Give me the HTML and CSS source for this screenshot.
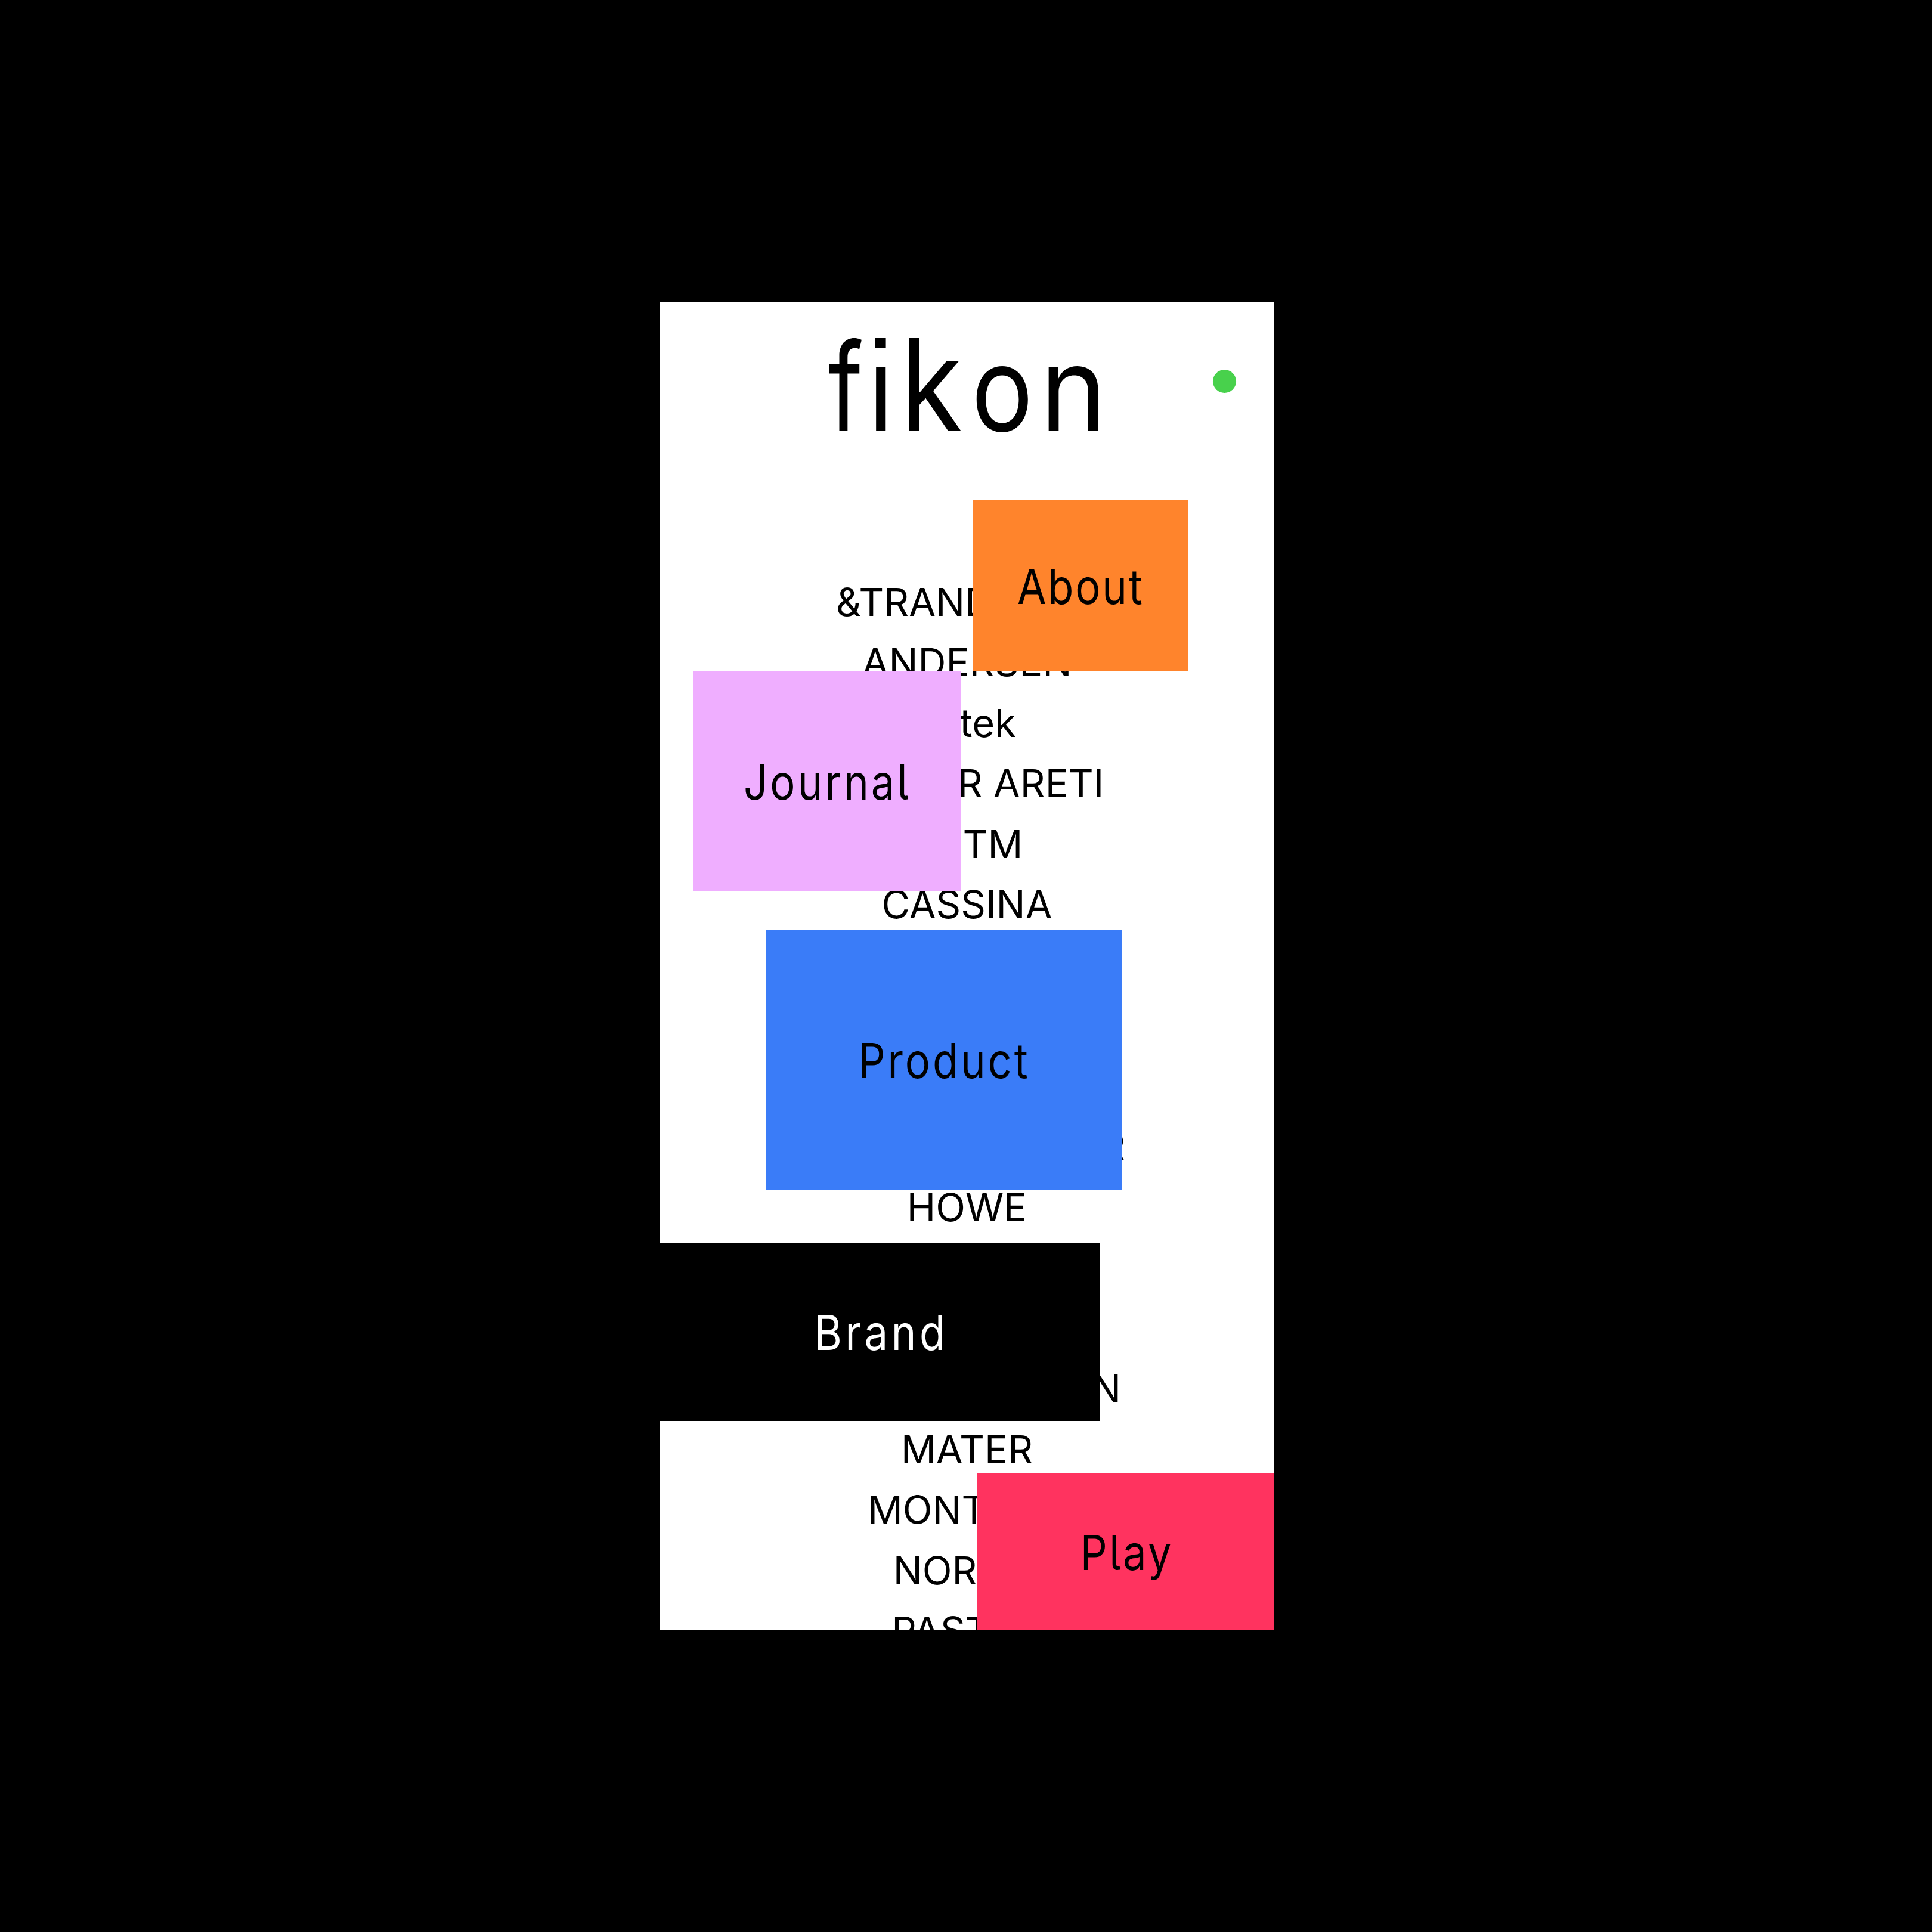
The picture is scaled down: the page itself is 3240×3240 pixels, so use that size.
FILE: index.html
```
<!DOCTYPE html>
<html lang="en">
<head>
<meta charset="utf-8">
<title>fikon</title>
<link rel="stylesheet" href="styles.css">
</head>
<body>
<main class="screen">
  <header class="header">
    <h1 class="logo"><span class="logo-f">f</span><span class="logo-i">i</span><span class="logo-k">k</span><span class="logo-o">o</span><span class="logo-n">n</span></h1>
    <span class="status"></span>
  </header>
  <ul class="brands">
    <li>&amp;TRANDITION</li>
    <li>ANDERSEN</li>
    <li>Artek</li>
    <li>ATELIER ARETI</li>
    <li>ASTM</li>
    <li>CASSINA</li>
    <li>FLOS</li>
    <li>FOGIA</li>
    <li>GUBI</li>
    <li>HERMAN MILLER</li>
    <li>HOWE</li>
    <li>KASTHALL</li>
    <li>LE KLINT</li>
    <li>LOUIS POULSEN</li>
    <li>MATER</li>
    <li>MONTANA</li>
    <li>NORR&#8201;11</li>
    <li>PASTOE</li>
  </ul>
  <nav>
    <a class="card about"><span>About</span></a>
    <a class="card journal"><span>Journal</span></a>
    <a class="card product"><span>Product</span></a>
    <a class="card brand"><span>Brand</span></a>
    <a class="card play"><span>Play</span></a>
  </nav>
</main>
</body>
</html>
```
FILE: styles.css
```
* {
  box-sizing: border-box;
}

body {
  display: flex;
  align-items: center;
  justify-content: center;
  height: 3240px;
  margin: 0;
  padding-left: 3px;
  background: #000;
  color: #000;
  font-family: Inter, "Liberation Sans", sans-serif;
}

.screen {
  position: relative;
  width: 1029px;
  height: 2226px;
  overflow: hidden;
  background: #fff;
}

.header {
  display: flex;
  align-items: flex-start;
  height: 451.5px;
  padding: 30px 0 0 282px;
}

/* wordmark: each letter is condensed from its baseline */
.logo {
  display: grid;
  grid-template-columns: 66px 55px 119px 115px 110px;
  margin: 0;
  font-size: 216px;
  font-weight: 400;
  line-height: 216px;
}

.logo span {
  justify-self: start;
  transform-origin: 0 186px;
}

.logo-f {
  transform: scale(.73, .95);
}

.logo-i {
  position: relative;
  transform: scaleX(.85);
}

.logo-k {
  transform: scaleX(.88);
}

.logo-o {
  transform: scale(.8, .91);
}

.logo-n {
  transform: scale(.88, .91);
}

/* square dot of the i, on a patch that hides the round one */
.logo-i::before,
.logo-i::after {
  content: "";
  position: absolute;
}

.logo-i::before {
  left: 8px;
  top: 15px;
  width: 36px;
  height: 63px;
  background: #fff;
}

.logo-i::after {
  left: 15px;
  top: 29px;
  width: 21px;
  height: 18px;
  background: #000;
}

.status {
  position: absolute;
  left: 927px;
  top: 112.5px;
  width: 39px;
  height: 39px;
  border-radius: 50%;
  background: #48d14c;
}

.brands {
  margin: 0;
  padding: 0;
  list-style: none;
  text-align: center;
  font-size: 65.1px;
  line-height: 101.5px;
}

.card {
  position: absolute;
  display: flex;
  align-items: center;
  justify-content: center;
  padding-top: 3px;
  font-size: 81px;
  font-weight: 400;
  line-height: 98px;
  font-feature-settings: "cv05";
}

.card span {
  transform: scaleX(.87);
}

.about {
  left: 524px;
  top: 331px;
  width: 362px;
  height: 288px;
  background: #ff842c;
  letter-spacing: 3.2px;
}

.journal {
  left: 55px;
  top: 619px;
  width: 450px;
  height: 368px;
  padding-left: 2px;
  background: #efaeff;
  letter-spacing: 4.7px;
}

.product {
  left: 177px;
  top: 1052.6px;
  width: 598px;
  height: 436px;
  padding-left: 2px;
  background: #3a7cf8;
  letter-spacing: 4.5px;
}

.brand {
  left: 0;
  top: 1577px;
  width: 738px;
  height: 299px;
  padding-left: 4px;
  background: #000;
  color: #fff;
  letter-spacing: 6.4px;
}

.play {
  left: 532px;
  top: 1964px;
  width: 497px;
  height: 262px;
  padding-left: 4px;
  background: #ff335f;
  letter-spacing: 4px;
}
```
